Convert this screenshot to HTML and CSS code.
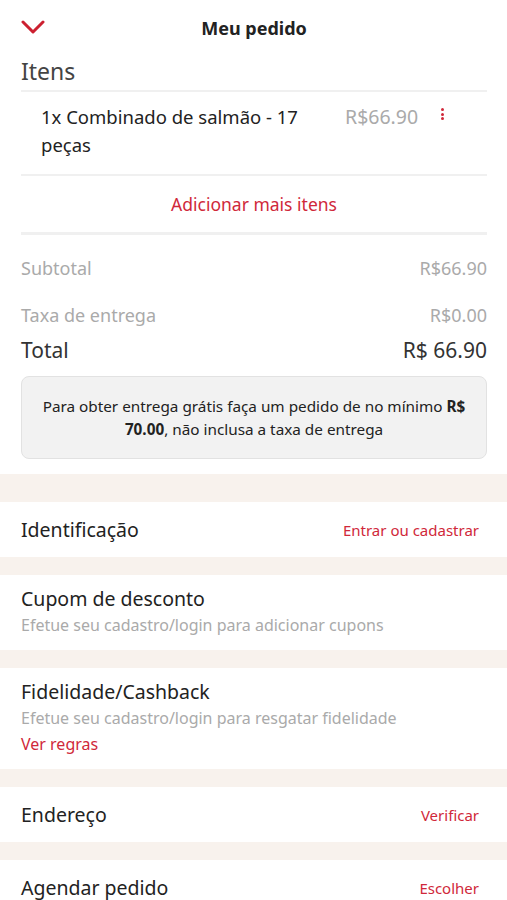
FILE: index.html
```html
<!DOCTYPE html>
<html>
<head>
    <meta charset="UTF-8">
    <link rel="stylesheet" href="styles.css">
</head>
<body>
<div class="order">
    <div class="panel">
        <header class="order-header">
            <svg class="back-icon" viewBox="0 0 24 14" width="24" height="14">
                <path d="M2 2l10 10 10-10" fill="none" stroke="#cc2030" stroke-width="3" stroke-linecap="round" stroke-linejoin="round"/>
            </svg>
            <h1>Meu pedido</h1>
        </header>

        <section class="items">
            <h2>Itens</h2>
            <div class="item-row">
                <span class="item-name">1x Combinado de salmão - 17 peças</span>
                <span class="item-price">R$66.90</span>
                <span class="item-menu"><i></i><i></i><i></i></span>
            </div>
            <a class="add-more">Adicionar mais itens</a>
        </section>

        <section class="totals">
            <div class="total-line muted"><span>Subtotal</span><span>R$66.90</span></div>
            <div class="total-line muted"><span>Taxa de entrega</span><span>R$0.00</span></div>
            <div class="total-line grand"><span>Total</span><span>R$ 66.90</span></div>
            <p class="notice">
                Para obter entrega grátis faça um pedido de no mínimo <b>R$</b> <b>70.00</b>, não inclusa a taxa de entrega
            </p>
        </section>
    </div>

    <div class="block inline">
        <span class="block-title">Identificação</span>
        <a class="block-link">Entrar ou cadastrar</a>
    </div>

    <div class="block">
        <span class="block-title">Cupom de desconto</span>
        <span class="block-sub">Efetue seu cadastro/login para adicionar cupons</span>
    </div>

    <div class="block">
        <span class="block-title">Fidelidade/Cashback</span>
        <span class="block-sub">Efetue seu cadastro/login para resgatar fidelidade</span>
        <a class="block-rules">Ver regras</a>
    </div>

    <div class="block inline">
        <span class="block-title">Endereço</span>
        <a class="block-link">Verificar</a>
    </div>

    <div class="block inline">
        <span class="block-title">Agendar pedido</span>
        <a class="block-link">Escolher</a>
    </div>
</div>
</body>
</html>
```

FILE: styles.css
```css
:root {
    --red: #d0283a;
    --band: #f8f2ed;
    --line: #f0f0f0;
}

* {
    margin: 0;
    padding: 0;
    box-sizing: border-box;
}

body {
    width: 507px;
    font-family: 'Noto Sans', 'Open Sans', sans-serif;
    color: #222;
    background: var(--band);
}

.order {
    display: flex;
    flex-direction: column;
    gap: 18px;
}

.panel {
    background: #fff;
    padding: 0 20px 15px 21px;
    margin-bottom: 10px;
}

.order-header {
    position: relative;
    height: 56px;
    display: flex;
    align-items: center;
    justify-content: center;
}

.order-header h1 {
    font-size: 18px;
    font-weight: 700;
}

.back-icon {
    position: absolute;
    left: 0;
    top: 20px;
}

.items h2 {
    font-size: 23px;
    font-weight: 400;
    color: #444;
    line-height: 30px;
    padding-bottom: 4px;
    border-bottom: 2px solid var(--line);
}

.item-row {
    display: flex;
    align-items: flex-start;
    padding: 11px 0 15px 20px;
    border-bottom: 2px solid var(--line);
    line-height: 28px;
}

.item-name {
    flex: 0 0 304px;
    font-size: 18.5px;
    color: #222;
}

.item-price {
    font-size: 19.5px;
    color: #aaa;
}

.item-menu {
    display: flex;
    flex-direction: column;
    gap: 1.5px;
    margin: 5px 0 0 23px;
}

.item-menu i {
    width: 3px;
    height: 3px;
    border-radius: 50%;
    background: var(--red);
}

.add-more {
    display: block;
    text-align: center;
    color: var(--red);
    font-size: 17.5px;
    line-height: 56px;
    border-bottom: 3px solid var(--line);
}

.totals {
    padding-top: 18px;
}

.total-line {
    display: flex;
    justify-content: space-between;
    font-size: 18px;
    line-height: 30px;
}

.total-line.muted {
    color: #aaa;
    margin-bottom: 17px;
}

.total-line.muted + .total-line.grand {
    margin-top: -12px;
}

.total-line.grand {
    font-size: 21px;
    color: #333;
}

.notice {
    margin-top: 11px;
    padding: 18px 8px 17px;
    background: #f2f2f2;
    border: 1px solid #e2e2e2;
    border-radius: 8px;
    text-align: center;
    font-size: 15.3px;
    line-height: 23px;
    color: #222;
}

.block {
    display: flex;
    flex-direction: column;
    background: #fff;
    padding: 11px 28px 12px 21px;
}

.block.inline {
    flex-direction: row;
    justify-content: space-between;
    align-items: center;
    height: 55px;
    padding-top: 0;
    padding-bottom: 0;
}

.block-title {
    font-size: 19.5px;
    line-height: 26px;
    color: #222;
}

.block-sub {
    font-size: 16px;
    line-height: 26px;
    color: #aaa;
}

.block-link {
    font-size: 15px;
    color: var(--red);
}

.block-rules {
    font-size: 16px;
    line-height: 26px;
    color: var(--red);
}
```
